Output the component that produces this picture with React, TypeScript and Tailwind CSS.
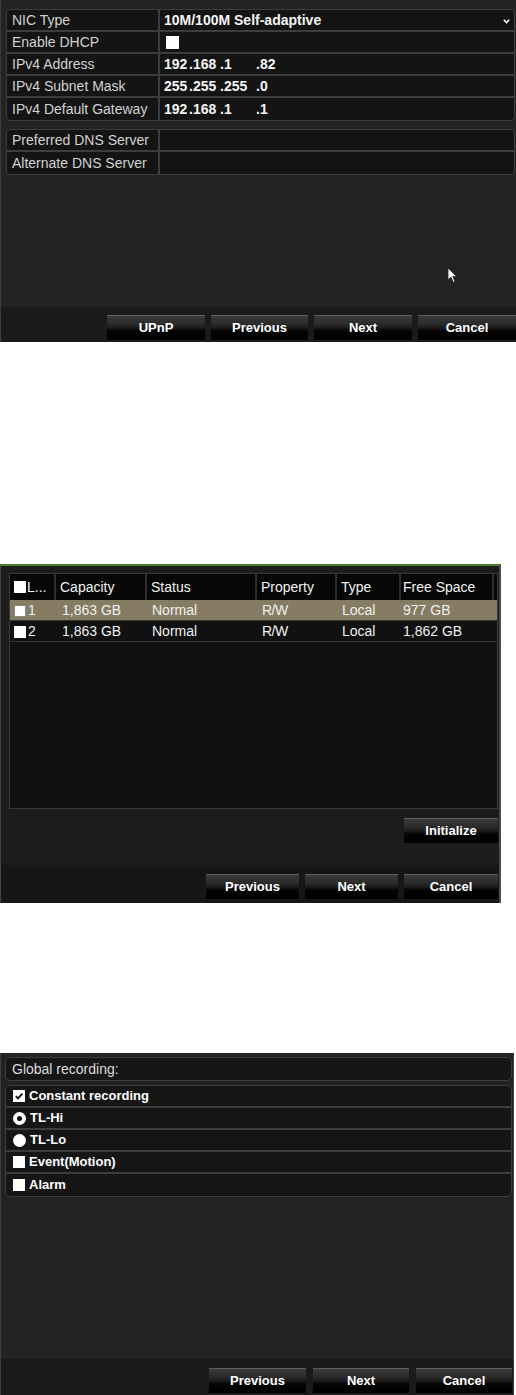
import clsx from "clsx";
import type { ReactNode } from "react";

const font = "font-['Liberation_Sans',Arial,sans-serif]";

function DvrButton({ children, className }: { children: ReactNode; className?: string }) {
  return (
    <div
      className={clsx(
        "flex h-[25px] items-center justify-center border-t border-[#5e5e5e] bg-[linear-gradient(to_bottom,#3a3a3a_0%,#2a2a2a_35%,#1a1a1a_50%,#050505_62%,#000_100%)] text-[13px] font-bold text-white",
        className,
      )}
    >
      {children}
    </div>
  );
}

function Box({ checked, className }: { checked?: boolean; className?: string }) {
  return (
    <span className={clsx("flex h-[12px] w-[12px] shrink-0 items-center justify-center bg-white", className)}>
      {checked && (
        <svg width="10" height="10" viewBox="0 0 10 10">
          <path d="M1.8 5.2 L4 7.4 L8.4 2.6" fill="none" stroke="#111" strokeWidth="1.8" />
        </svg>
      )}
    </span>
  );
}

function Radio({ on }: { on?: boolean }) {
  return (
    <span className="flex h-[13px] w-[13px] shrink-0 items-center justify-center rounded-full bg-white">
      {on && <span className="h-[5px] w-[5px] rounded-full bg-[#111]" />}
    </span>
  );
}

// ip octets sit in fixed-width fields, dot prefixed
function Ip({ parts }: { parts: string[] }) {
  const widths = ["w-[25px]", "w-[31px]", "w-[36px]", ""];
  return (
    <div className="flex">
      {parts.map((p, i) => (
        <span key={i} className={widths[i]}>
          {i ? "." + p : p}
        </span>
      ))}
    </div>
  );
}

function FieldRow({ label, children, last }: { label: string; children?: ReactNode; last?: boolean }) {
  return (
    <div className={clsx("flex h-[22px]", !last && "border-b-2 border-[#3c3e3e]")}>
      <div className="flex w-[153px] items-center border-r-2 border-[#3c3e3e] pl-[5px] text-[14px] text-[#d2d2d2]">
        {label}
      </div>
      <div className="relative flex flex-1 items-center pl-[4px] text-[14px] font-bold text-[#f4f4f4]">{children}</div>
    </div>
  );
}

function NetworkPanel() {
  return (
    <div className="relative flex h-[342px] w-[516px] flex-col border-l border-[#3a3d3d] bg-[#222424]">
      <div className="flex flex-col gap-[8px] pt-[9px] pl-[5px] pr-[1px]">
        <div className="overflow-hidden rounded-[4px] border border-[#3c3e3e] bg-[#141414]">
          <FieldRow label="NIC Type">
            10M/100M Self-adaptive
            <svg className="absolute right-[4px] top-[9px]" width="7" height="5" viewBox="0 0 7 5">
              <path d="M0.8 0.8 L3.5 3.6 L6.2 0.8" fill="none" stroke="#fff" strokeWidth="1.6" />
            </svg>
          </FieldRow>
          <FieldRow label="Enable DHCP">
            <span className="ml-[2px] h-[13px] w-[13px] bg-white" />
          </FieldRow>
          <FieldRow label="IPv4 Address">
            <Ip parts={["192", "168", "1", "82"]} />
          </FieldRow>
          <FieldRow label="IPv4 Subnet Mask">
            <Ip parts={["255", "255", "255", "0"]} />
          </FieldRow>
          <FieldRow label="IPv4 Default Gateway" last>
            <Ip parts={["192", "168", "1", "1"]} />
          </FieldRow>
        </div>
        <div className="overflow-hidden rounded-[4px] border border-[#3c3e3e] bg-[#141414]">
          <FieldRow label="Preferred DNS Server" />
          <FieldRow label="Alternate DNS Server" last />
        </div>
      </div>

      <svg className="absolute left-[446px] top-[267px]" width="11" height="17" viewBox="0 0 11 17">
        <path d="M1 1 L1 13 L4 10.2 L6.3 15.2 L8 14.4 L5.8 9.5 L9.6 9.5 Z" fill="#fff" stroke="#222" strokeWidth="0.8" />
      </svg>

      <div className="mt-auto flex h-[35px] justify-end gap-[6px] bg-[#1a1b1b] pt-[8px]">
        <DvrButton className="w-[98px]">UPnP</DvrButton>
        <DvrButton className="w-[97px]">Previous</DvrButton>
        <DvrButton className="w-[98px]">Next</DvrButton>
        <DvrButton className="w-[98px]">Cancel</DvrButton>
      </div>
    </div>
  );
}

const disks = [
  { id: "1", cap: "1,863 GB", status: "Normal", prop: "R/W", type: "Local", free: "977 GB", selected: true },
  { id: "2", cap: "1,863 GB", status: "Normal", prop: "R/W", type: "Local", free: "1,862 GB", selected: false },
];

const cols = "grid grid-cols-[46px_91px_110px_80px_64px_93px_1fr]";

function DiskPanel() {
  return (
    <div className="flex h-[339px] w-[501px] flex-col border-t-2 border-l border-r-2 border-t-[#4c7f2c] border-l-[#444] border-r-[#4a4a4a] bg-[#1c1c1c]">
      <div className="pt-[7px] pl-[8px]">
        <div className="flex h-[236px] w-[489px] flex-col border border-[#3a3a3a] bg-[#111]">
          <div className={clsx(cols, "h-[26px] bg-[#070707] text-[14px] text-[#f2f2f2]")}>
            <div className="flex items-center gap-[1px] border-r-2 border-[#2e2e2e] pl-[4px]">
              <Box className="bg-[#e2e2e2]" />
              <span>L...</span>
            </div>
            <div className="flex items-center border-r-2 border-[#2e2e2e] pl-[4px]">Capacity</div>
            <div className="flex items-center border-r-2 border-[#2e2e2e] pl-[4px]">Status</div>
            <div className="flex items-center border-r-2 border-[#2e2e2e] pl-[4px]">Property</div>
            <div className="flex items-center border-r-2 border-[#2e2e2e] pl-[4px]">Type</div>
            <div className="flex items-center border-r-2 border-[#2e2e2e] pl-[2px]">Free Space</div>
            <div />
          </div>
          {disks.map((d) => (
            <div
              key={d.id}
              className={clsx(
                cols,
                "h-[21px] border-b border-[#333] text-[14px] text-[#f0f0f0]",
                d.selected ? "bg-[#857c63]" : "bg-[#111]",
              )}
            >
              <div className="flex items-center gap-[2px] pl-[4px]">
                <Box className={d.selected ? "border border-[#8a8a8a] bg-[#dedede]" : "bg-[#dcdcdc]"} />
                <span>{d.id}</span>
              </div>
              <div className="flex items-center pl-[6px]">{d.cap}</div>
              <div className="flex items-center pl-[5px]">{d.status}</div>
              <div className="flex items-center pl-[5px] tracking-[-0.5px]">{d.prop}</div>
              <div className="flex items-center pl-[5px]">{d.type}</div>
              <div className="flex items-center pl-[2px]">{d.free}</div>
              <div />
            </div>
          ))}
        </div>
      </div>
      <div className="mt-[9px] flex justify-end pr-[1px]">
        <DvrButton className="w-[94px]">Initialize</DvrButton>
      </div>
      <div className="mt-auto flex h-[38px] justify-end gap-[6px] bg-[#161616] pt-[9px] pr-[1px]">
        <DvrButton className="w-[93px]">Previous</DvrButton>
        <DvrButton className="w-[93px]">Next</DvrButton>
        <DvrButton className="w-[94px]">Cancel</DvrButton>
      </div>
    </div>
  );
}

const modes: { label: string; kind: "check" | "radio"; on: boolean }[] = [
  { label: "Constant recording", kind: "check", on: true },
  { label: "TL-Hi", kind: "radio", on: true },
  { label: "TL-Lo", kind: "radio", on: false },
  { label: "Event(Motion)", kind: "check", on: false },
  { label: "Alarm", kind: "check", on: false },
];

function RecordingPanel() {
  return (
    <div className="flex h-[342px] w-[514px] flex-col border-l border-r border-l-[#3d4040] border-r-[#3a3a3a] bg-[#222424]">
      <div className="flex flex-col gap-[4px] pt-[4px] pl-[4px] pr-[1px]">
        <div className="flex h-[24px] items-center rounded-[5px] border border-[#3c3e3e] bg-[#161616] pl-[6px] text-[14px] text-[#dcdcdc]">
          Global recording:
        </div>
        <div className="overflow-hidden rounded-[5px] border border-[#3c3e3e] bg-[#161616]">
          {modes.map((m, i) => (
            <div
              key={m.label}
              className={clsx(
                "flex h-[22px] items-center gap-[4px] pl-[7px] text-[13px] font-bold text-white",
                i < modes.length - 1 && "border-b-2 border-[#3c3e3e]",
              )}
            >
              {m.kind === "check" ? <Box checked={m.on} /> : <Radio on={m.on} />}
              <span>{m.label}</span>
            </div>
          ))}
        </div>
      </div>
      <div className="mt-auto flex h-[36px] justify-end gap-[7px] bg-[#1a1a1a] pt-[9px] pr-[1px]">
        <DvrButton className="w-[97px]">Previous</DvrButton>
        <DvrButton className="w-[96px]">Next</DvrButton>
        <DvrButton className="w-[96px]">Cancel</DvrButton>
      </div>
    </div>
  );
}

export default function App() {
  return (
    <div className={clsx("flex h-[1395px] w-[516px] flex-col bg-white", font)}>
      <NetworkPanel />
      <div className="mt-[222px]">
        <DiskPanel />
      </div>
      <div className="mt-[150px]">
        <RecordingPanel />
      </div>
    </div>
  );
}
